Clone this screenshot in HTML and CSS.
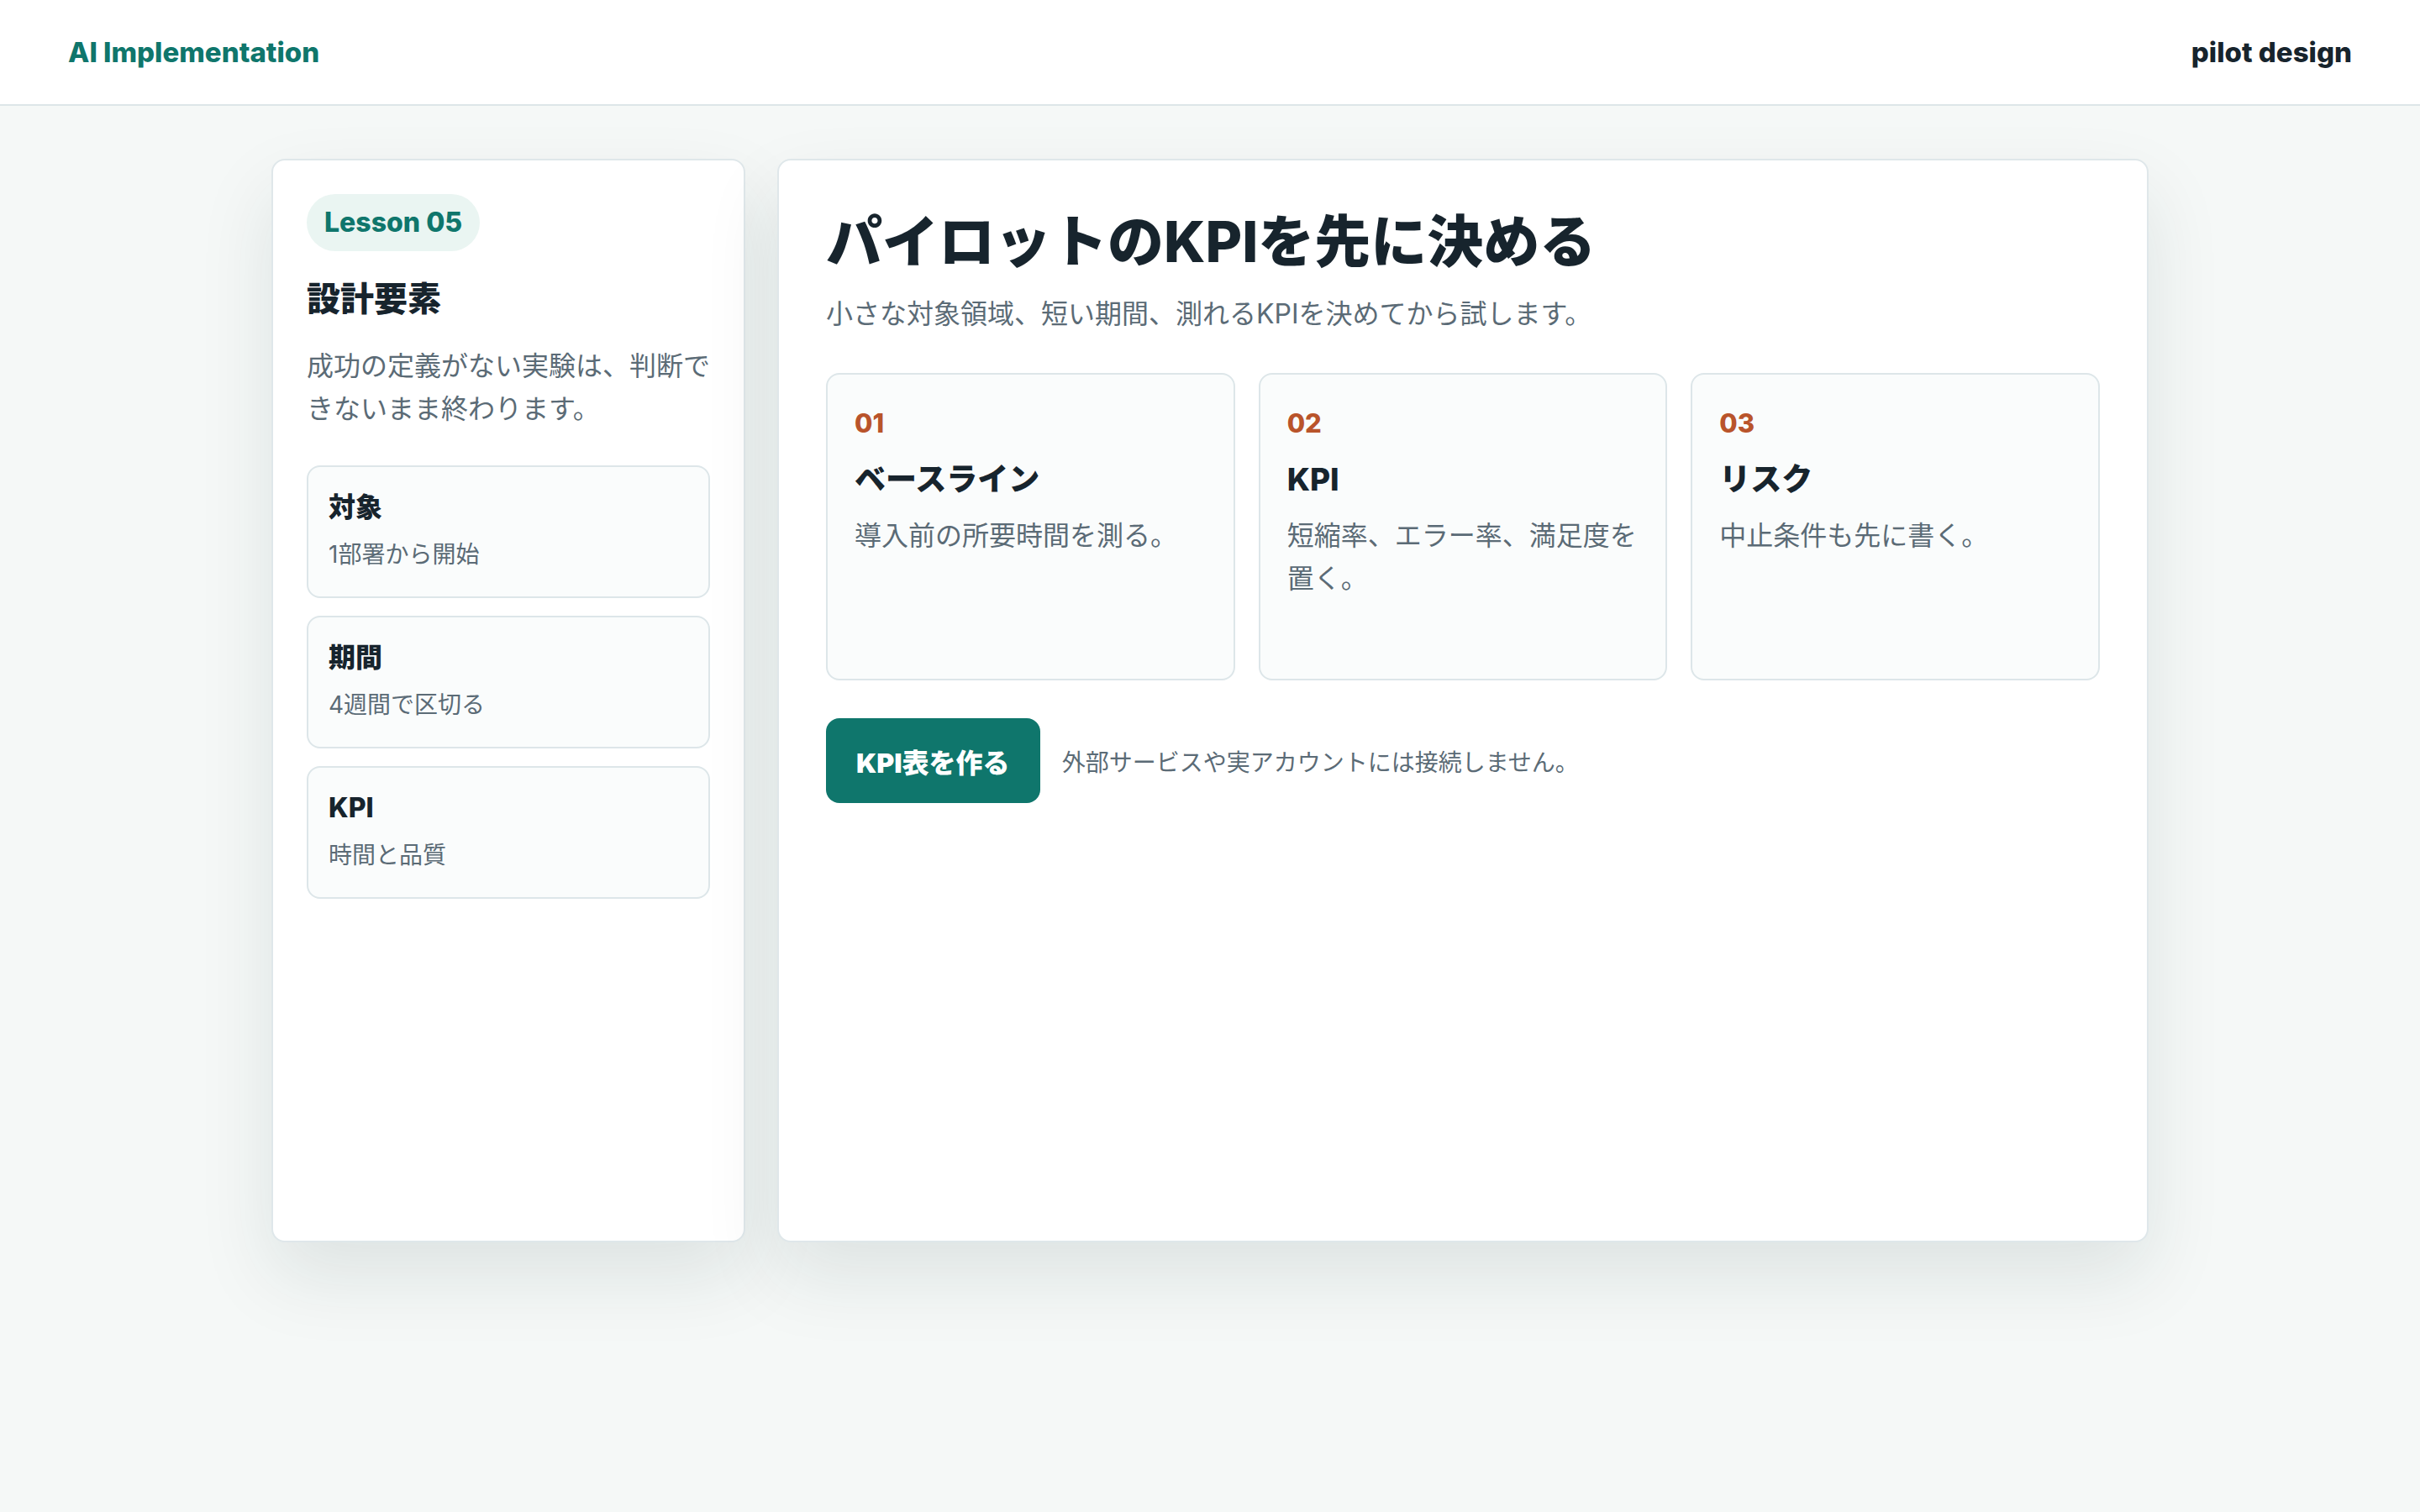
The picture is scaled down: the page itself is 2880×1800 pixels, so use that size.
FILE: index.html
```html
<!DOCTYPE html>
<html lang="ja">
  <head>
    <meta charset="UTF-8" />
    <meta name="viewport" content="width=device-width, initial-scale=1.0" />
    <title>AI Implementation - pilot design</title>
    <link rel="stylesheet" href="styles.css">
  </head>

  <body>
    <header class="topbar">
      <div class="brand">AI Implementation</div>
      <div class="section-name">pilot design</div>
    </header>

    <main class="layout">
      <aside class="sidebar">
        <span class="badge">Lesson 05</span>
        <h2>設計要素</h2>
        <p class="lead">成功の定義がない実験は、判断できないまま終わります。</p>

        <div class="facts">
          <div class="fact">
            <strong>対象</strong>
            <span>1部署から開始</span>
          </div>
          <div class="fact">
            <strong>期間</strong>
            <span>4週間で区切る</span>
          </div>
          <div class="fact">
            <strong>KPI</strong>
            <span>時間と品質</span>
          </div>
        </div>
      </aside>

      <section class="content">
        <h1>パイロットのKPIを先に決める</h1>
        <p class="summary">小さな対象領域、短い期間、測れるKPIを決めてから試します。</p>

        <div class="steps">
          <div class="step">
            <div class="num">01</div>
            <h3>ベースライン</h3>
            <p>導入前の所要時間を測る。</p>
          </div>
          <div class="step">
            <div class="num">02</div>
            <h3>KPI</h3>
            <p>短縮率、エラー率、満足度を置く。</p>
          </div>
          <div class="step">
            <div class="num">03</div>
            <h3>リスク</h3>
            <p>中止条件も先に書く。</p>
          </div>
        </div>

        <div class="actions">
          <button class="primary" type="button">KPI表を作る</button>
          <span class="note">外部サービスや実アカウントには接続しません。</span>
        </div>
      </section>
    </main>
  </body>
</html>
```

FILE: styles.css
```css
* {
  box-sizing: border-box;
}

body {
  margin: 0;
  min-height: 100vh;
  background: #f5f8f7;
  color: #17242d;
  font-family: Inter, "Noto Sans CJK JP", sans-serif;
}

h1,
h2,
h3,
p {
  margin: 0;
}

.topbar {
  height: 126px;
  padding: 0 81px;
  display: flex;
  align-items: center;
  justify-content: space-between;
  background: #ffffff;
  border-bottom: 2px solid #dde6e8;
  font-size: 33px;
  font-weight: 800;
}

.brand {
  color: #0f766c;
}

.section-name {
  color: #17242d;
}

.layout {
  width: 2234px;
  margin: 63px auto 0;
  padding-bottom: 200px;
  display: grid;
  grid-template-columns: 564px 1fr;
  gap: 38px;
}

.sidebar,
.content {
  min-height: 1290px;
  background: #ffffff;
  border: 2px solid #dfe7ea;
  border-radius: 16px;
  box-shadow: 0 40px 90px rgba(24, 52, 48, 0.1);
}

.sidebar {
  padding: 40px;
}

.badge {
  display: inline-block;
  padding: 11px 21px;
  border-radius: 40px;
  background: #eaf5f2;
  color: #0f766c;
  font-size: 32px;
  font-weight: 800;
  line-height: 46px;
}

.sidebar h2 {
  margin-top: 29px;
  font-size: 40px;
  line-height: 56px;
  font-weight: 800;
}

.lead {
  margin-top: 26px;
  color: #5b6b76;
  font-size: 32px;
  line-height: 51px;
}

.facts {
  margin-top: 42px;
  display: flex;
  flex-flow: column;
  gap: 21px;
}

.fact {
  display: flex;
  flex-flow: column;
  gap: 8px;
  padding: 25px 24px;
  background: #fafcfc;
  border: 2px solid #dde6e9;
  border-radius: 16px;
}

.fact strong {
  font-size: 32px;
  line-height: 46px;
  font-weight: 800;
}

.fact span {
  color: #5b6b76;
  font-size: 28px;
  line-height: 50px;
}

.content {
  padding: 56px;
}

.content h1 {
  font-size: 67px;
  line-height: 82px;
  font-weight: 800;
}

.summary {
  margin-top: 19px;
  color: #5b6b76;
  font-size: 32px;
  line-height: 51px;
}

.steps {
  margin-top: 45px;
  display: grid;
  grid-template-columns: repeat(3, 1fr);
  gap: 28px;
}

.step {
  min-height: 366px;
  padding: 34px 32px 32px;
  background: #fafcfc;
  border: 2px solid #dde6e9;
  border-radius: 16px;
}

.num {
  color: #b9542b;
  font-size: 31px;
  line-height: 48px;
  font-weight: 800;
}

.step h3 {
  margin-top: 18px;
  font-size: 37px;
  line-height: 50px;
  font-weight: 800;
}

.step p {
  margin-top: 16px;
  color: #5b6b76;
  font-size: 32px;
  line-height: 51px;
}

.actions {
  margin-top: 45px;
  display: flex;
  align-items: center;
  gap: 26px;
}

.primary {
  height: 101px;
  padding: 0 36px;
  border: 0;
  border-radius: 16px;
  background: #0f766c;
  color: #ffffff;
  font-family: inherit;
  font-size: 32px;
  font-weight: 900;
  cursor: pointer;
}

.note {
  color: #5b6b76;
  font-size: 28px;
}
```
